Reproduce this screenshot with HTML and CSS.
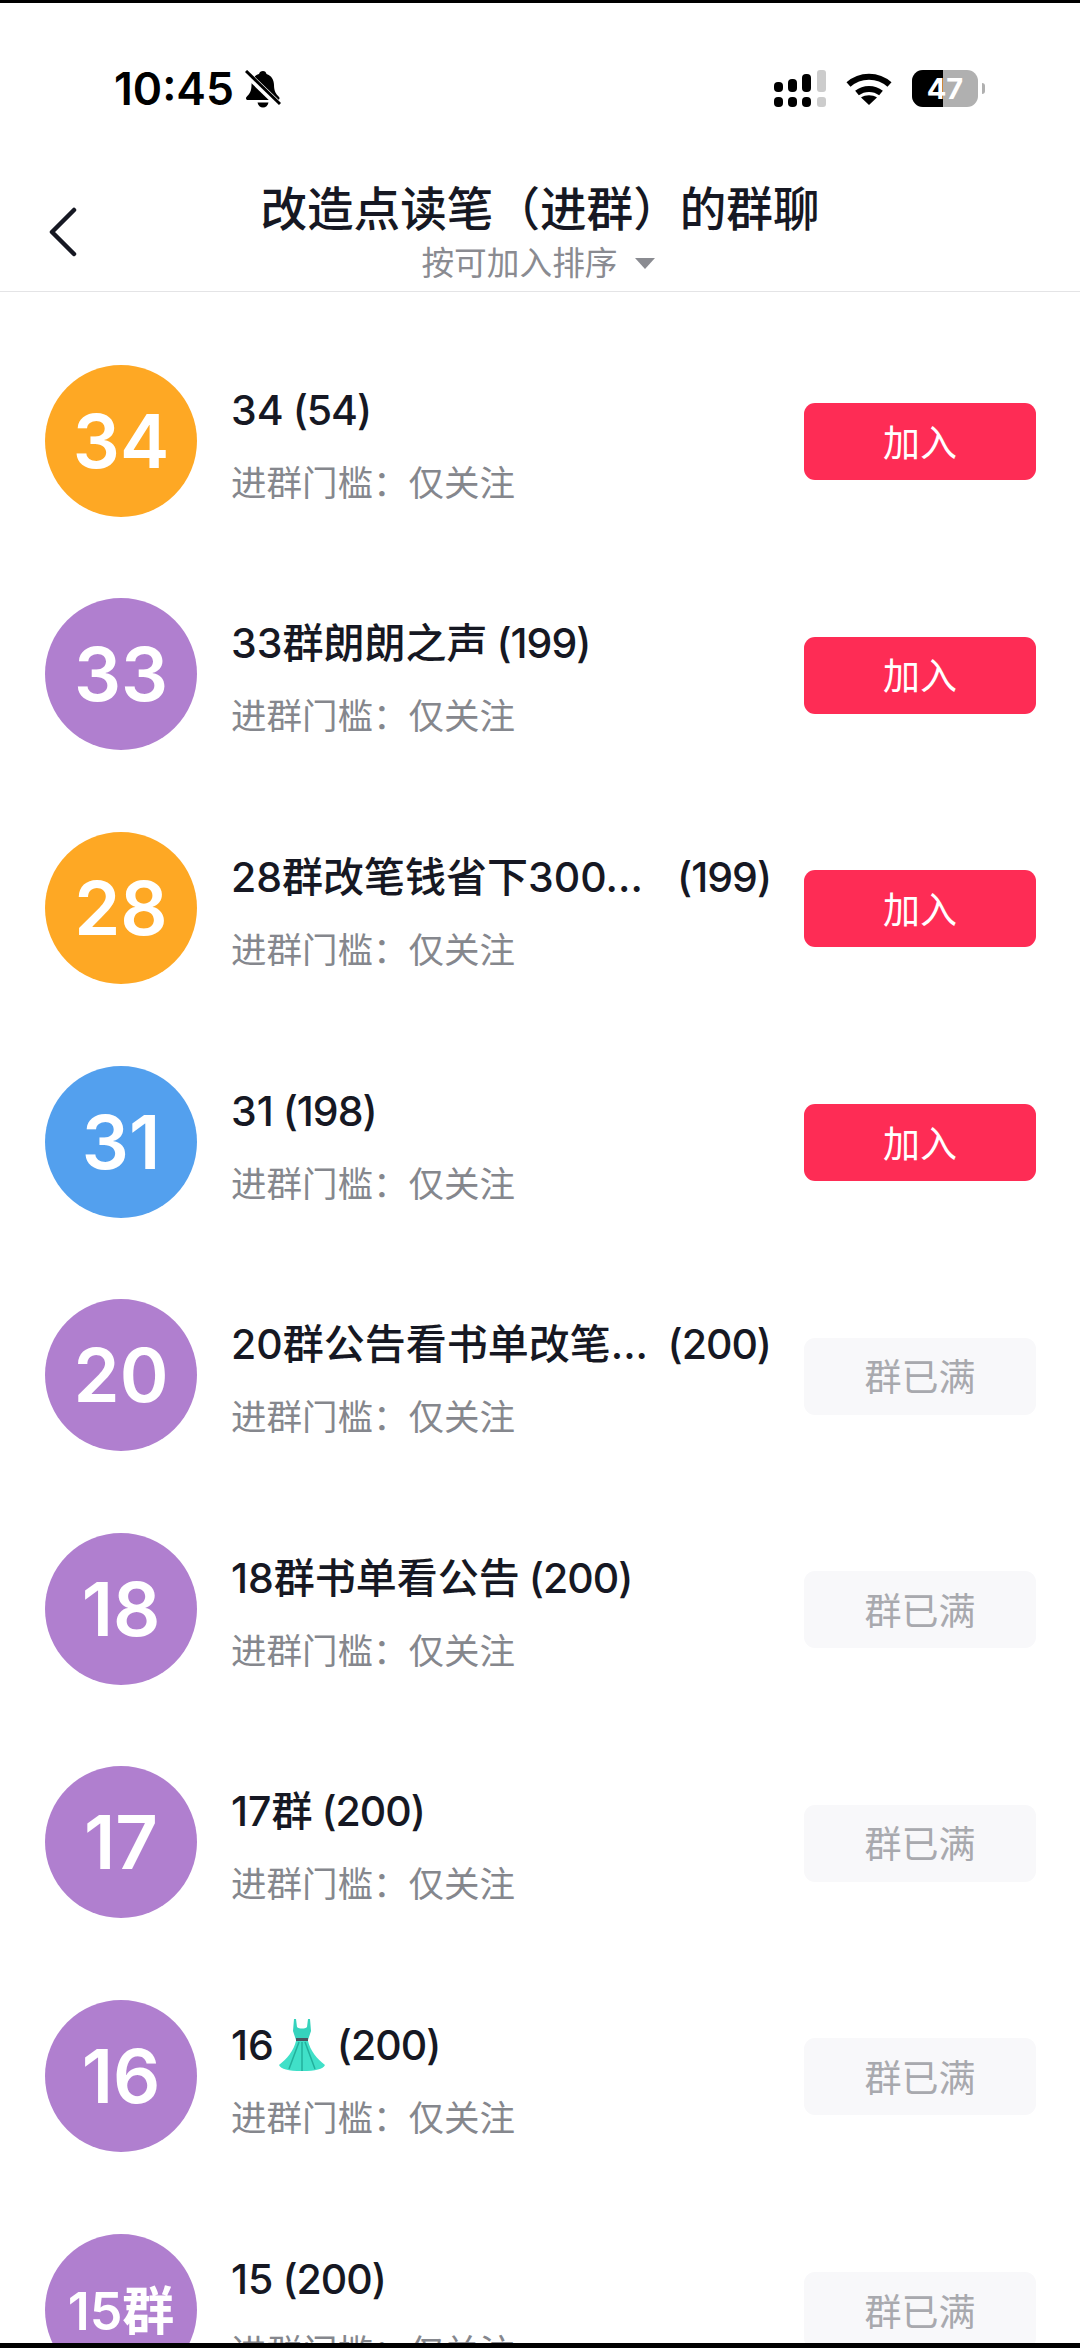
FILE: index.html
```html
<!DOCTYPE html>
<html lang="zh-CN">
<head>
  <meta charset="UTF-8">
  <meta name="viewport" content="width=device-width, initial-scale=1.0">
  <title>群聊列表</title>
  <link rel="stylesheet" href="styles.css">
</head>
<body>

<div class="screen">
  <div class="status-bar">
    <div class="status-left">
      <span class="time">10:45</span>
      <svg class="bell" viewBox="0 0 36 38">
        <path d="M18 1c2 0 3 1 3.500 3 5 1.500 7.500 6 7.500 11 0 6 2 9 5 12 1 1 .5 3-1.500 3H3c-2 0-2.500-2-1.500-3 3-3 5-6 5-12 0-5 2.500-9.500 7.500-11C14.500 2 16 1 18 1z" fill="#000"/>
        <path d="M12.500 32.500h11c-.5 3-2.800 5-5.500 5s-5-2-5.500-5z" fill="#000"/>
        <path d="M1 3l34 33" stroke="#fff" stroke-width="7"/>
        <path d="M1 1l34 33" stroke="#000" stroke-width="3"/>
      </svg>
    </div>
    <div class="status-right">
      <svg class="signal" viewBox="0 0 52 37">
        <rect x="0" y="12" width="9" height="10" rx="4" fill="#000"/>
        <rect x="14" y="9" width="9" height="13" rx="4" fill="#000"/>
        <rect x="28" y="4" width="9" height="18" rx="4" fill="#000"/>
        <rect x="43" y="0" width="9" height="22" rx="3" fill="#ccc"/>
        <rect x="0" y="27" width="9" height="10" rx="4" fill="#000"/>
        <rect x="14" y="27" width="9" height="10" rx="4" fill="#000"/>
        <rect x="28" y="27" width="9" height="10" rx="4" fill="#000"/>
        <rect x="43" y="27" width="9" height="10" rx="3" fill="#ccc"/>
      </svg>
      <svg class="wifi" viewBox="0 0 46 33">
        <path d="M2.500 12.500C14 2 32 2 43.500 12.500" fill="none" stroke="#000" stroke-width="6"/>
        <path d="M11 21c7-5.500 17-5.500 24 0" fill="none" stroke="#000" stroke-width="6"/>
        <path d="M23 33l-8-7.500c4.500-3 11.500-3 16 0z" fill="#000"/>
      </svg>
      <div class="battery">
        <div class="battery-body">
          <div class="battery-fill"></div>
          <span class="battery-num">47</span>
        </div>
        <div class="battery-nub"></div>
      </div>
    </div>
  </div>

  <div class="header">
    <svg class="back" viewBox="0 0 30 50">
      <path d="M26 3L4 25l22 22" fill="none" stroke="#161823" stroke-width="4.500" stroke-linecap="round" stroke-linejoin="round"/>
    </svg>
    <div class="header-center">
      <div class="header-title">改造点读笔（进群）的群聊</div>
      <div class="header-sort">按可加入排序<span class="sort-arrow"></span></div>
    </div>
  </div>

  <div class="list">
    <div class="row">
      <div class="avatar orange">34</div>
      <div class="info">
        <div class="name"><span>34</span><span class="count">(54)</span></div>
        <div class="limit">进群门槛：仅关注</div>
      </div>
      <button class="btn">加入</button>
    </div>
    <div class="row">
      <div class="avatar purple">33</div>
      <div class="info">
        <div class="name"><span>33群朗朗之声</span><span class="count">(199)</span></div>
        <div class="limit">进群门槛：仅关注</div>
      </div>
      <button class="btn">加入</button>
    </div>
    <div class="row">
      <div class="avatar orange">28</div>
      <div class="info">
        <div class="name name-long"><span>28群改笔钱省下300...</span><span class="count">(199)</span></div>
        <div class="limit">进群门槛：仅关注</div>
      </div>
      <button class="btn">加入</button>
    </div>
    <div class="row">
      <div class="avatar blue">31</div>
      <div class="info">
        <div class="name"><span>31</span><span class="count">(198)</span></div>
        <div class="limit">进群门槛：仅关注</div>
      </div>
      <button class="btn">加入</button>
    </div>
    <div class="row">
      <div class="avatar purple">20</div>
      <div class="info">
        <div class="name name-long"><span>20群公告看书单改笔...</span><span class="count">(200)</span></div>
        <div class="limit">进群门槛：仅关注</div>
      </div>
      <button class="btn btn-full">群已满</button>
    </div>
    <div class="row">
      <div class="avatar purple">18</div>
      <div class="info">
        <div class="name"><span>18群书单看公告</span><span class="count">(200)</span></div>
        <div class="limit">进群门槛：仅关注</div>
      </div>
      <button class="btn btn-full">群已满</button>
    </div>
    <div class="row">
      <div class="avatar purple">17</div>
      <div class="info">
        <div class="name"><span>17群</span><span class="count">(200)</span></div>
        <div class="limit">进群门槛：仅关注</div>
      </div>
      <button class="btn btn-full">群已满</button>
    </div>
    <div class="row">
      <div class="avatar purple">16</div>
      <div class="info">
        <div class="name">
          <span>16</span>
          <svg class="dress" viewBox="0 0 50 54">
            <path d="M17 1l2 0 1 8c2 2 8 2 10 0l1-8 2 0 1 12-3 9H19l-3-9z" fill="#35d3bd"/>
            <rect x="19" y="20" width="12" height="3.500" fill="#4a5560"/>
            <path d="M19 23h12c2 9 9 18 17 24-2 4-9 6-23 6S4 51 2 47c8-6 15-15 17-24z" fill="#40e0c8"/>
            <path d="M22 24L12 51M25 24v29M28 24l10 27" stroke="#22b09c" stroke-width="1.500" fill="none"/>
          </svg>
          <span class="count">(200)</span>
        </div>
        <div class="limit">进群门槛：仅关注</div>
      </div>
      <button class="btn btn-full">群已满</button>
    </div>
    <div class="row">
      <div class="avatar purple avatar-small">15群</div>
      <div class="info">
        <div class="name"><span>15</span><span class="count">(200)</span></div>
        <div class="limit">进群门槛：仅关注</div>
      </div>
      <button class="btn btn-full">群已满</button>
    </div>
  </div>
</div>

</body>
</html>
```

FILE: styles.css
```css
* {
  box-sizing: border-box;
}
body {
  margin: 0;
  background-color: #fff;
  font-family: Inter, "Noto Sans CJK SC", sans-serif;
  color: #161823;
}
.screen {
  height: 2348px;
  overflow: hidden;
  border-top: 3px solid #000;
  border-bottom: 5px solid #000;
}

/* status bar */
.status-bar {
  height: 170px;
  display: flex;
  justify-content: space-between;
  align-items: center;
  padding: 0 95px 0 114px;
}
.status-left {
  display: flex;
  align-items: center;
  gap: 11px;
  padding-top: 2px;
}
.time {
  font-size: 44.500px;
  font-weight: 600;
  color: #000;
  line-height: 50px;
}
.bell {
  width: 36px;
  height: 38px;
}
.status-right {
  display: flex;
  align-items: center;
}
.signal {
  width: 52px;
  height: 37px;
}
.wifi {
  width: 46px;
  height: 33px;
  margin-left: 20px;
}
.battery {
  display: flex;
  align-items: center;
  margin-left: 20px;
}
.battery-body {
  width: 66px;
  height: 37px;
  border-radius: 11px;
  background-color: #b0b0b0;
  overflow: hidden;
  display: flex;
  align-items: center;
  justify-content: center;
  position: relative;
}
.battery-fill {
  position: absolute;
  left: 0;
  top: 0;
  bottom: 0;
  width: 31px;
  background-color: #000;
}
.battery-num {
  position: relative;
  font-size: 29px;
  font-weight: 700;
  color: #fff;
}
.battery-nub {
  width: 3px;
  height: 11px;
  margin-left: 4px;
  border-radius: 0 3px 3px 0;
  background-color: #b0b0b0;
}

/* header */
.header {
  height: 119px;
  display: grid;
  grid-template-columns: 1fr auto 1fr;
  align-items: start;
  border-bottom: 1px solid #e4e4e6;
}
.back {
  width: 30px;
  height: 50px;
  margin: 34px 0 0 48px;
}
.header-center {
  text-align: center;
}
.header-title {
  font-size: 46.600px;
  font-weight: 500;
  line-height: 66px;
  margin-top: 3px;
}
.header-sort {
  font-size: 32.700px;
  line-height: 40px;
  margin-top: 1px;
  color: #8a8b91;
  display: flex;
  justify-content: center;
  align-items: center;
  padding-right: 4px;
}
.sort-arrow {
  width: 0;
  height: 0;
  margin-left: 17px;
  border-left: 10px solid transparent;
  border-right: 10px solid transparent;
  border-top: 11px solid #8a8b91;
}

/* list */
.list {
  padding-top: 32px;
}
.row {
  height: 233.600px;
  display: flex;
  align-items: center;
  padding: 0 44px 0 45px;
}
.avatar {
  width: 152px;
  height: 152px;
  flex-shrink: 0;
  border-radius: 50%;
  display: flex;
  align-items: center;
  justify-content: center;
  color: #fff;
  font-size: 74px;
  font-weight: 600;
}
.avatar-small {
  font-size: 52px;
  padding-bottom: 4px;
}
.orange {
  background-color: #fea824;
}
.purple {
  background-color: #b07fcf;
}
.blue {
  background-color: #53a0ee;
}
.info {
  flex: 1;
  min-width: 0;
  margin-left: 34px;
  padding-top: 14px;
}
.name {
  display: flex;
  align-items: center;
  font-size: 41px;
  font-weight: 500;
  line-height: 46px;
  white-space: nowrap;
}
.name-long {
  width: 540px;
  justify-content: space-between;
}
.count {
  margin-left: 9px;
  letter-spacing: -1px;
}
.dress {
  width: 52px;
  height: 54px;
  margin: -4px 0 -4px 2px;
}
.limit {
  margin-top: 26px;
  font-size: 35.500px;
  line-height: 50px;
  color: #85878d;
}
.btn {
  width: 232px;
  height: 77px;
  flex-shrink: 0;
  margin-top: 2px;
  border: none;
  border-radius: 11px;
  background-color: #fe2c55;
  color: #fff;
  font-family: inherit;
  font-size: 37px;
  padding: 0 0 2px;
}
.btn-full {
  background-color: #f8f8fa;
  color: #a8a9ae;
}
```
